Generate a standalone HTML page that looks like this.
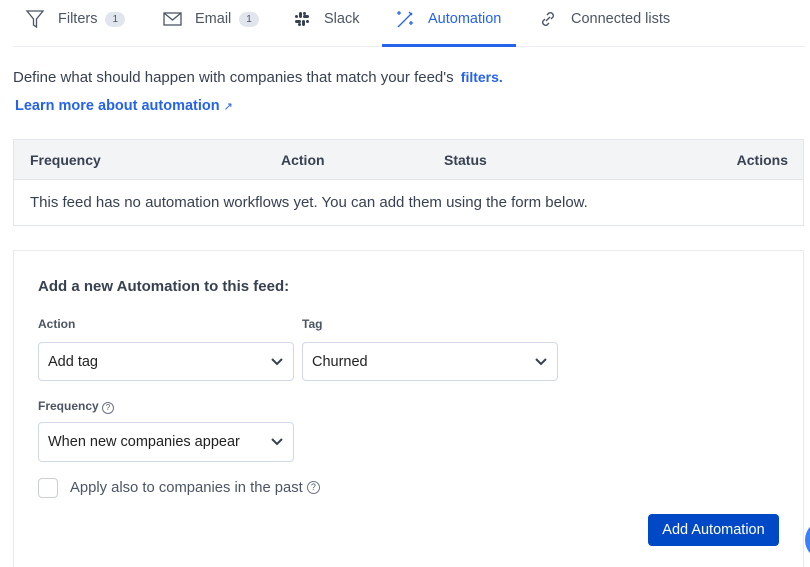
<!DOCTYPE html><html><head><style>
html{overflow:hidden;height:567px}
body{margin:0;width:810px;height:567px;overflow:hidden;background:#fff;font-family:"Liberation Sans",sans-serif;color:#374151;position:relative}
.a{position:absolute}
.tab{position:absolute;top:9px;height:20px;font-size:14.5px;color:#4b5563;display:flex;align-items:center}
.badge{display:inline-block;background:#e1e6ee;color:#4b5563;font-size:10px;border-radius:8px;padding:2px 7px;margin-left:8px}
.sel{position:absolute;height:38px;border:1px solid #d1d9e6;border-radius:4px;box-sizing:border-box;font-size:14.5px;color:#222;padding:11px 9px 0}
.sel svg{position:absolute;right:9px;top:12px}
.lbl{position:absolute;font-size:12px;font-weight:bold;color:#4b5563}
</style></head><body>
<div class="tab" style="left:25px"><svg width="20" height="20" viewBox="0 0 20 20" fill="none" stroke="#4b5563" stroke-width="1.3"><path d="M2 2h16l-6.5 8v8l-3-2v-6z"/></svg><span style="margin-left:13px">Filters</span><span class="badge">1</span></div>
<div class="tab" style="left:163px"><svg width="20" height="20" viewBox="0 0 20 20" fill="none" stroke="#4b5563" stroke-width="1.3"><rect x="1" y="4" width="17" height="12"/><path d="M1 4l8.5 7 8.5-7"/></svg><span style="margin-left:12px">Email</span><span class="badge">1</span></div>
<div class="tab" style="left:294px"><svg width="16" height="16" viewBox="0 0 16 16" fill="#374151"><rect x="5" y="1" width="3" height="6" rx="1.5"/><rect x="8" y="9" width="3" height="6" rx="1.5"/><rect x="1" y="9" width="6" height="3" rx="1.5"/><rect x="9" y="4" width="6" height="3" rx="1.5"/><rect x="1" y="4" width="3" height="3" rx="1.5"/><rect x="12" y="9" width="3" height="3" rx="1.5"/><rect x="9" y="1" width="3" height="3" rx="1.5"/><rect x="4" y="12" width="3" height="3" rx="1.5"/></svg><span style="margin-left:14px">Slack</span></div>
<div class="tab" style="left:395px;color:#2563eb"><svg width="20" height="20" viewBox="0 0 20 20" fill="none" stroke="#2563eb" stroke-width="1.3"><path d="M3 18L17 4M14 3l3 3M4 2v4M2 4h4M16 12v4M14 14h4"/></svg><span style="margin-left:13px">Automation</span></div>
<div class="tab" style="left:538px"><svg width="20" height="20" viewBox="0 0 20 20" fill="none" stroke="#4b5563" stroke-width="1.4"><path d="M8 12l4-4M9 6l2-2a3 3 0 014 4l-2 2M11 14l-2 2a3 3 0 01-4-4l2-2"/></svg><span style="margin-left:13px">Connected lists</span></div>
<div class="a" style="left:13px;top:46px;width:792px;height:1px;background:#eceef2"></div>
<div class="a" style="left:382px;top:44px;width:134px;height:3px;background:#2563eb"></div>
<div class="a" style="left:13px;top:69px;font-size:15px;color:#374151">Define what should happen with companies that match your feed's <b style="color:#2563eb;margin-left:3px;font-size:14px">filters.</b></div>
<div class="a" style="left:15px;top:98px;font-size:14.5px;font-weight:bold;color:#2563eb">Learn more about automation <span style="font-size:11px;font-weight:normal">↗</span></div>
<div class="a" style="left:13px;top:139px;width:791px;height:87px;border:1px solid #e2e5ea;box-sizing:border-box">
<div style="height:39px;background:#f3f4f6;border-bottom:1px solid #e2e5ea;font-size:14px;font-weight:bold;color:#374151;position:relative">
<span class="a" style="left:16px;top:12px">Frequency</span><span class="a" style="left:267px;top:12px">Action</span><span class="a" style="left:430px;top:12px">Status</span><span class="a" style="right:15px;top:12px">Actions</span></div>
<div class="a" style="left:16px;top:54px;font-size:15px;color:#374151">This feed has no automation workflows yet. You can add them using the form below.</div></div>
<div class="a" style="left:13px;top:250px;width:791px;height:317px;border:1px solid #e8eaee;border-bottom:none;box-sizing:border-box"></div>
<div class="a" style="left:38px;top:278px;font-size:15px;font-weight:bold;color:#374151">Add a new Automation to this feed:</div>
<div class="lbl" style="left:38px;top:317px">Action</div>
<div class="lbl" style="left:302px;top:317px">Tag</div>
<div class="sel" style="left:38px;top:342px;width:256px;height:39px">Add tag<svg width="14" height="14" viewBox="0 0 14 14" fill="none" stroke="#374151" stroke-width="2"><path d="M2 4l5 5 5-5"/></svg></div>
<div class="sel" style="left:302px;top:342px;width:256px;height:39px">Churned<svg width="14" height="14" viewBox="0 0 14 14" fill="none" stroke="#374151" stroke-width="2"><path d="M2 4l5 5 5-5"/></svg></div>
<div class="lbl" style="left:38px;top:399px">Frequency <span style="font-weight:normal;border:1px solid #6b7280;border-radius:50%;font-size:8px;display:inline-block;width:10px;height:10px;text-align:center;line-height:10px">?</span></div>
<div class="sel" style="left:38px;top:422px;width:256px;height:40px">When new companies appear<svg width="14" height="14" viewBox="0 0 14 14" fill="none" stroke="#374151" stroke-width="2"><path d="M2 4l5 5 5-5"/></svg></div>
<div class="a" style="left:38px;top:478px;width:20px;height:20px;border:1px solid #c9ced8;border-radius:4px;box-sizing:border-box"></div>
<div class="a" style="left:70px;top:480px;font-size:14.8px;color:#4b5563">Apply also to companies in the past <span style="border:1px solid #6b7280;border-radius:50%;font-size:9px;display:inline-block;width:11px;height:11px;text-align:center;line-height:11px;vertical-align:2px">?</span></div>
<div class="a" style="left:648px;top:514px;width:131px;height:32px;background:#0049c6;border-radius:4px;color:#fff;font-size:14.5px;text-align:center;line-height:32px">Add Automation</div>
<div class="a" style="left:805px;top:520px;width:40px;height:40px;border-radius:50%;background:#3b82f6"></div>
</body></html>
